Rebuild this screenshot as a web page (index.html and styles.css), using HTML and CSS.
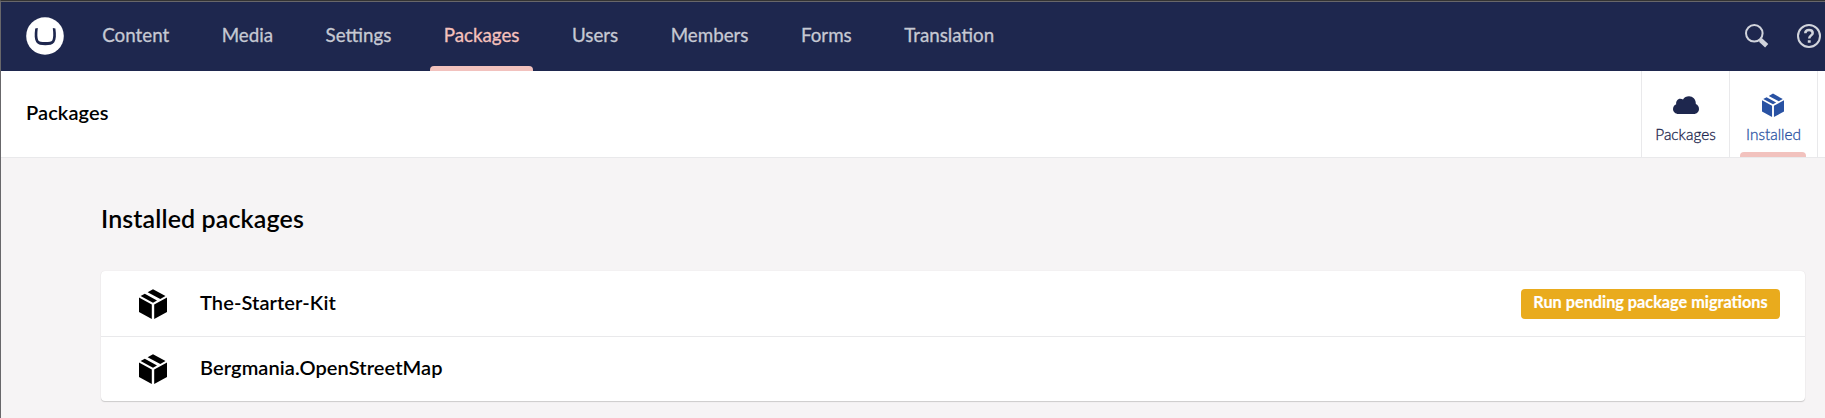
FILE: index.html
```html
<!DOCTYPE html>
<html lang="en">
<head>
<meta charset="utf-8">
<title>Packages</title>
<link rel="stylesheet" href="styles.css">
</head>
<body>
<svg class="symbols" aria-hidden="true">
  <symbol id="box" viewBox="0 0 28 30">
    <path d="M0 8.600 12.800 15.500V30L0 23ZM28 8.600 15.200 15.500V30L28 23ZM1.600 7.100 5.800 4.800 18 11.600 14 13.700ZM8.600 3.300 14 .2 26.500 7.100 21.300 10Z"/>
  </symbol>
</svg>
<div class="app">
  <header class="topbar">
    <svg class="logo" viewBox="0 0 38 38"><circle cx="19" cy="19" r="18.800" fill="#fff"/><path d="M9.200 11.500C8.300 18 8.500 22.500 10.300 25.200 12.100 27.600 15 28.200 19.300 28.200S26.500 27.600 28.300 25.200C30.100 22.500 30.300 18 29.400 11.500L26.800 11.100C27.500 17 27.400 21 26.400 23.200 25.400 24.800 23 25 19.300 25S13.200 24.800 12.200 23.200C11.200 21 11.100 17 11.800 11.100Z" fill="#1e274e"/></svg>
    <nav class="sections">
      <a class="section">Content</a>
      <a class="section">Media</a>
      <a class="section">Settings</a>
      <a class="section section-active">Packages</a>
      <a class="section">Users</a>
      <a class="section">Members</a>
      <a class="section">Forms</a>
      <a class="section">Translation</a>
    </nav>
    <div class="tools">
      <svg class="tool" viewBox="0 0 24 24"><circle cx="9.300" cy="9.300" r="8.300" fill="none" stroke="currentColor" stroke-width="2"/><path d="m15.500 16 6.200 5.800" stroke="currentColor" stroke-width="4.600"/><path d="m14.800 14.800 3 3" stroke="currentColor" stroke-width="3"/></svg>
      <svg class="tool" viewBox="0 0 24 24"><circle cx="12" cy="12" r="11" fill="none" stroke="currentColor" stroke-width="2"/><path d="M8.300 9.300C8.300 6.900 9.700 5.900 12 5.900S15.700 7 15.700 8.900C15.700 11.300 12.200 11.500 12.200 14.500" fill="none" stroke="currentColor" stroke-width="2.500"/><path d="M10.800 16.200h2.900v2.600h-2.900z" fill="currentColor"/></svg>
    </div>
  </header>
  <div class="subheader">
    <h1 class="page-title">Packages</h1>
    <div class="tabs">
      <a class="tab">
        <svg class="tab-icon" viewBox="0 0 26 26"><path d="M5.500 22C2.400 22 0 19.800 0 17 0 14.700 1.400 12.900 3.200 12.200 2.800 9.200 4.600 6.700 7.200 6.700 8.400 6.700 9.300 7 10 7.600 11.200 5.400 13.500 4.300 16 4.300 19.800 4.300 22.800 7.200 22.800 11.200V12C24.800 12.800 26 14.600 26 17 26 19.800 23.800 22 20.800 22Z" fill="currentColor"/></svg>
        <span>Packages</span>
      </a>
      <a class="tab tab-active">
        <svg class="tab-icon" viewBox="0 0 26 26"><use href="#box" x="1" y="1" width="22" height="24.500" fill="currentColor"/></svg>
        <span>Installed</span>
      </a>
    </div>
  </div>
  <main class="content">
    <h2 class="heading">Installed packages</h2>
    <div class="list">
      <div class="row"><svg class="row-icon"><use href="#box"/></svg><span class="name">The-Starter-Kit</span><button class="migrate">Run pending package migrations</button></div>
      <div class="row"><svg class="row-icon"><use href="#box"/></svg><span class="name">Bergmania.OpenStreetMap</span></div>
    </div>
  </main>
</div>
</body>
</html>
```
FILE: styles.css
```css
* { box-sizing: border-box; }
body { margin: 0; background: #f6f4f5; font-family: Lato, sans-serif; color: #000; }
.symbols { display: none; }
.app { height: 418px; overflow: hidden; border-left: 1px solid #68676a; border-top: 1px solid #333; }
.topbar { height: 70px; border-top: 1px solid #68676a; background: #1e274e; display: flex; align-items: stretch; padding: 0 4px 0 25px; }
.logo { width: 38px; height: 38px; margin-top: 15px; flex: none; }
.sections { display: flex; margin-left: 12px; }
.section { position: relative; padding: 0 26.250px; font-size: 18.750px; line-height: 66px; color: #c6c9d3; -webkit-text-stroke: .3px currentColor; }
.section-active { color: #f5c1bc; }
.section-active::after { content: ""; position: absolute; left: 12px; right: 13px; bottom: 0; height: 5px; background: #f2c2be; border-radius: 4px 4px 0 0; }
.tools { margin-left: auto; display: flex; gap: 28px; padding-top: 22px; color: #d1d4dc; }
.tool { width: 24px; height: 24px; }
.subheader { height: 87px; background: #fff; border-bottom: 1px solid #e9e9eb; display: flex; padding: 0 7px 0 25px; }
.page-title { margin: 0; font-size: 20px; font-weight: 600; letter-spacing: .1px; line-height: 82px; }
.tabs { margin-left: auto; display: flex; border-right: 1px solid #e9e9eb; }
.tab { width: 88px; border-left: 1px solid #e9e9eb; position: relative; display: flex; flex-direction: column; align-items: center; padding-top: 21px; font-size: 15.400px; font-weight: 300; line-height: 20px; color: #1e274e; -webkit-text-stroke: .3px currentColor; }
.tab-icon { width: 26px; height: 26px; margin-bottom: 6px; }
.tab-active { color: #2952a3; }
.tab-active::after { content: ""; position: absolute; left: 10px; right: 11px; bottom: 0; height: 5px; background: #f2c2be; border-radius: 4px 4px 0 0; }
.content { padding: 44px 20px 0 100px; }
.heading { margin: 0 0 37px; font-size: 25px; font-weight: 600; letter-spacing: .12px; line-height: 32px; }
.list { background: #fff; border-radius: 4px; box-shadow: 0 1px 1px rgba(0,0,0,.16), 0 0 1px rgba(0,0,0,.12); }
.row { height: 65px; display: flex; align-items: center; padding: 0 25px 0 38px; }
.row + .row { border-top: 1px solid #e9e9eb; }
.row-icon { width: 28px; height: 30px; }
.row + .row .row-icon { margin-top: -1px; }
.name { margin-left: 33px; font-size: 20px; font-weight: 600; letter-spacing: .1px; position: relative; top: -2px; }
.migrate { margin-left: auto; width: 259px; height: 30px; padding: 0 0 4px; border: 0; border-radius: 4px; background: #e9ab1d; color: #fff; font: 700 16.250px/26px Lato, sans-serif; -webkit-text-stroke: .2px currentColor; }
```
